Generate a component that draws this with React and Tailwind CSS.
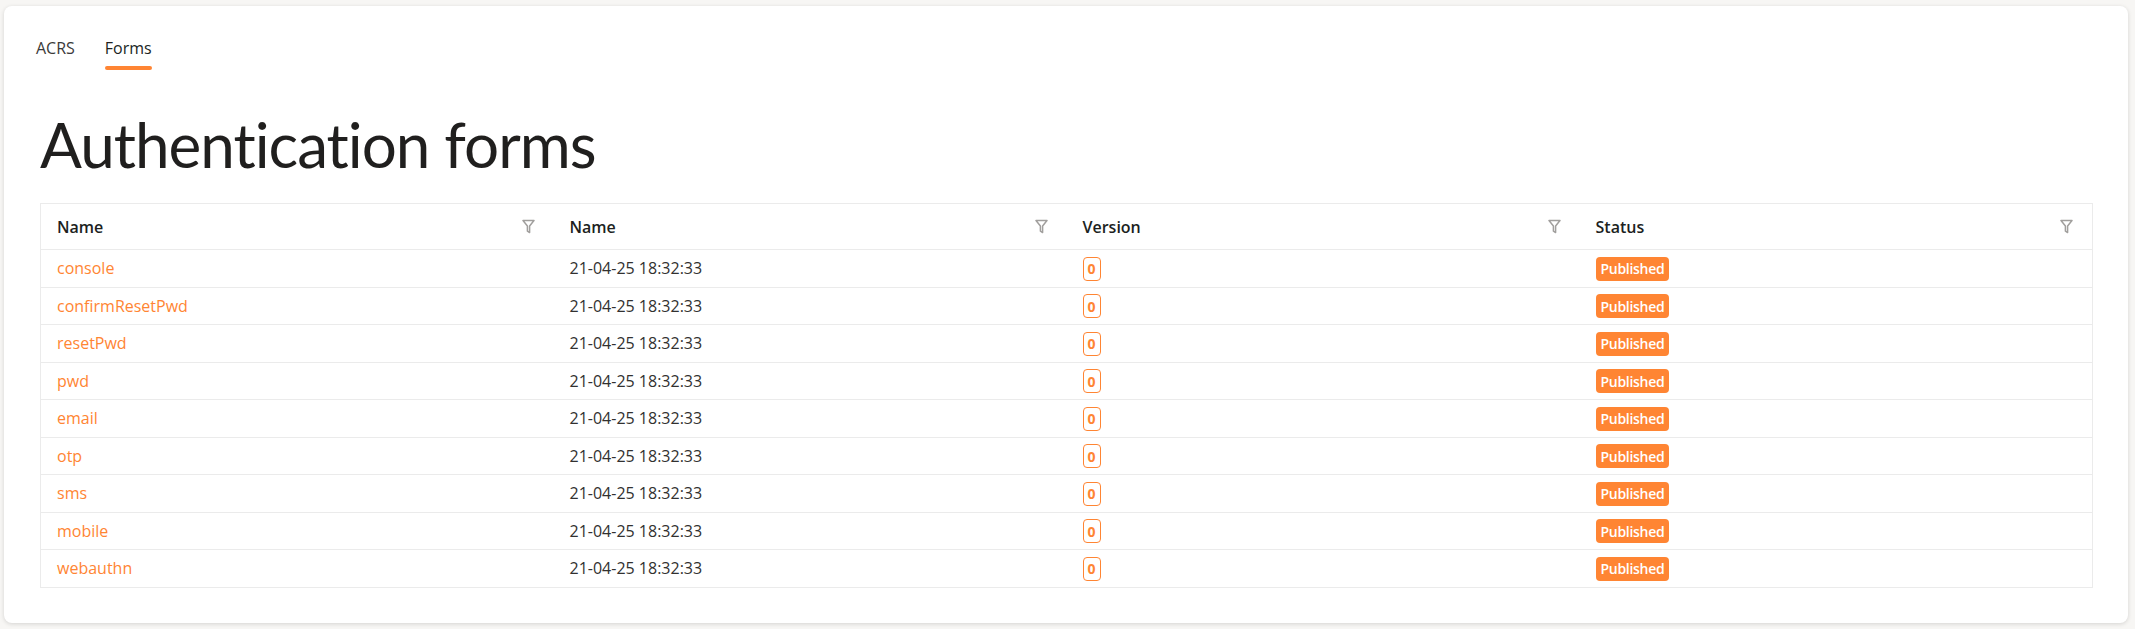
const forms = [
  'console',
  'confirmResetPwd',
  'resetPwd',
  'pwd',
  'email',
  'otp',
  'sms',
  'mobile',
  'webauthn',
]

const columns = ['Name', 'Name', 'Version', 'Status']

function FilterIcon() {
  return (
    <svg width="13" height="15" viewBox="0 0 13 15" fill="none" className="shrink-0">
      <path
        d="M1 1.5h11L7.6 7v6.5l-2.2-1.3V7z"
        stroke="#a19f9d"
        strokeWidth="1.5"
        strokeLinejoin="round"
      />
    </svg>
  )
}

export default function App() {
  return (
    <div
      className="min-h-[629px] bg-[#f7f6f4] pt-[6px] pl-[4px] pr-[7px]"
      style={{ fontFamily: '"Open Sans", "Noto Sans", sans-serif' }}
    >
      <div className="h-[617px] rounded-lg bg-white shadow-[0_1px_4px_rgba(0,0,0,0.14)]">
        {/* Tabs */}
        <div className="flex gap-[24px] pl-[29px] pt-[30px]">
          <div className="flex flex-col px-[3px]">
            <span className="text-[16px] leading-6 text-[#3b3a39]">ACRS</span>
            <span className="mt-[6px] h-[4px]" />
          </div>
          <div className="flex flex-col px-[3px]">
            <span className="text-[16px] leading-6 text-[#201f1e]">Forms</span>
            <span className="mt-[6px] h-[4px] rounded-full bg-[#ff8533]" />
          </div>
        </div>

        <div className="pl-[36px] pr-[35px]">
          <h1 className="mt-[36px] font-['Lato',sans-serif] text-[62px] leading-[76px] font-normal tracking-[-1px] text-[#201f1e]">
            Authentication forms
          </h1>

          {/* Table */}
          <table className="mt-[21px] w-full table-fixed border-collapse border border-[#ebebeb]">
            <thead>
              <tr className="h-[46px] border-b border-[#ebebeb]">
                {columns.map((col, i) => (
                  <th key={i} className="px-0 text-left font-normal">
                    <div className="flex items-center justify-between pl-[16px] pr-[19px]">
                      <span className="text-[16px] font-semibold text-[#201f1e]">{col}</span>
                      <FilterIcon />
                    </div>
                  </th>
                ))}
              </tr>
            </thead>
            <tbody>
              {forms.map((name) => (
                <tr key={name} className="h-[37.5px] border-b border-[#ebebeb]">
                  <td className="pl-[16px] text-[16px] text-[#ff8533]">{name}</td>
                  <td className="pl-[16px] text-[16px] text-[#323130]">21-04-25 18:32:33</td>
                  <td className="pl-[16px]">
                    <span className="inline-flex h-[24px] items-center rounded-[4px] border border-[#ff8533] px-[4px] text-[14px] font-bold text-[#ff8533]">
                      0
                    </span>
                  </td>
                  <td className="pl-[16px]">
                    <span className="inline-flex h-[24px] items-center rounded-[4px] bg-[#ff8533] px-[5px] text-[14px] font-semibold tracking-[-0.3px] text-white">
                      Published
                    </span>
                  </td>
                </tr>
              ))}
            </tbody>
          </table>
        </div>
      </div>
    </div>
  )
}
